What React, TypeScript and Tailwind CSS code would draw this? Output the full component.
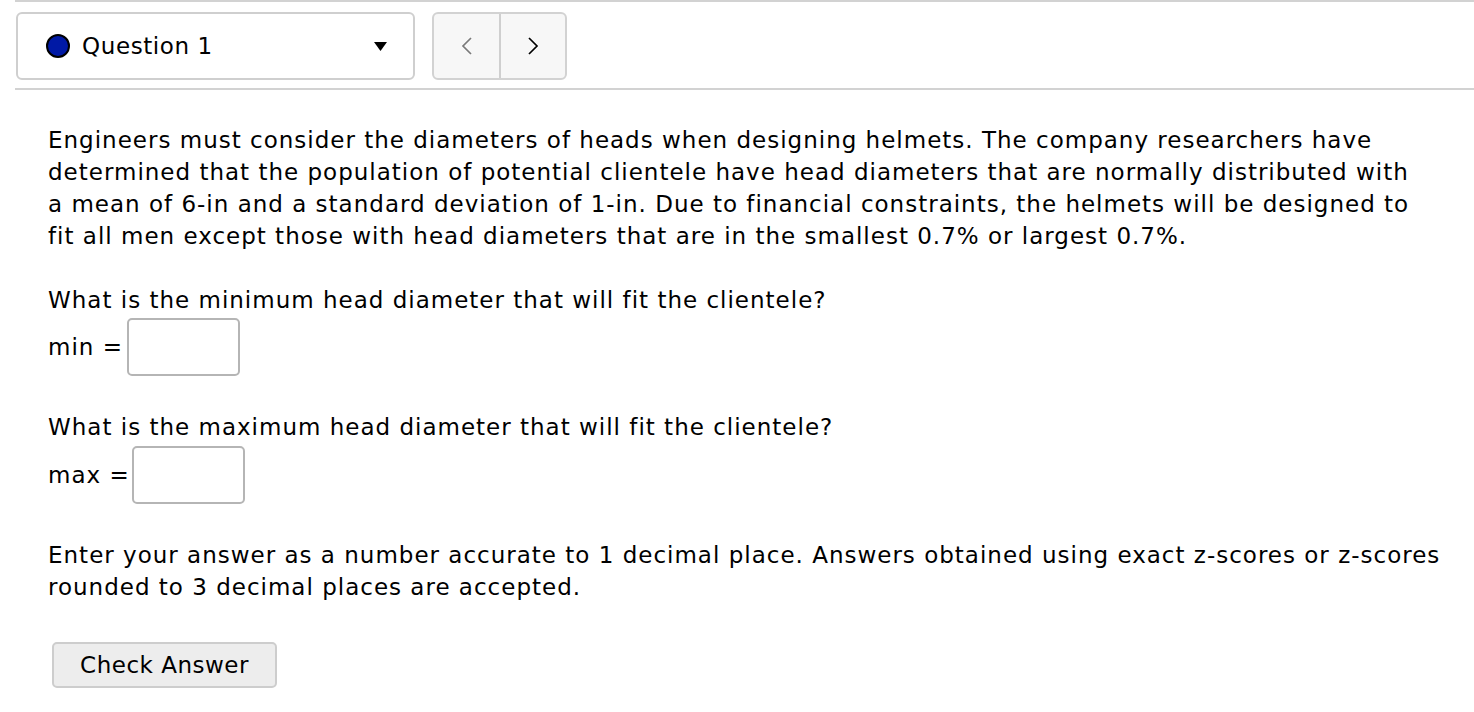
const font = { fontFamily: "'DejaVu Sans', Verdana, sans-serif" };

const Chevron = ({ dir, color }: { dir: "left" | "right"; color: string }) => (
  <svg width="12" height="18" viewBox="0 0 12 18" fill="none">
    <polyline
      points={dir === "left" ? "10,1 2,9 10,17" : "2,1 10,9 2,17"}
      stroke={color}
      strokeWidth="1.7"
      strokeLinejoin="miter"
    />
  </svg>
);

const AnswerBox = ({ className = "" }: { className?: string }) => (
  <input
    type="text"
    className={`h-[58px] w-[113px] rounded-[5px] border-2 border-[#b5b5b5] bg-white outline-none ${className}`}
  />
);

export default function App() {
  return (
    <div className="min-h-screen bg-white text-black" style={font}>
      {/* question picker bar */}
      <div className="ml-[15px] flex items-center gap-[17px] border-t-2 border-b-2 border-[#d2d2d2] pb-[8px] pl-px pt-[10px]">
        <div className="flex h-[68px] w-[399px] items-center rounded-[6px] border-2 border-[#cfcfcf] bg-white pl-[28px] pr-[26px]">
          <span className="h-[24px] w-[24px] rounded-full border-2 border-black bg-[#0019a5]" />
          <span className="ml-[12px] text-[23px] tracking-[0.6px]">Question 1</span>
          <svg className="ml-auto" width="13" height="9" viewBox="0 0 13 9">
            <polygon points="0,0 13,0 6.5,9" fill="#000" />
          </svg>
        </div>
        <div className="flex h-[68px] w-[135px] overflow-hidden rounded-[6px] border-2 border-[#d2d2d2] bg-[#f7f7f7]">
          <button className="flex w-[67px] items-center justify-center border-r-2 border-[#cfcfcf]">
            <Chevron dir="left" color="#7a7a7a" />
          </button>
          <button className="flex flex-1 items-center justify-center">
            <Chevron dir="right" color="#000" />
          </button>
        </div>
      </div>

      {/* question body */}
      <div className="pl-[48px] pr-[26px] pt-[34px] text-[23px] leading-[32px] tracking-[1px]">
        <p className="max-w-[1374px]">
          Engineers must consider the diameters of heads when designing helmets. The company researchers have
          determined that the population of potential clientele have head diameters that are normally distributed
          with a mean of 6-in and a standard deviation of 1-in. Due to financial constraints, the helmets will be
          designed to fit all men except those with head diameters that are in the smallest 0.7% or largest 0.7%.
        </p>

        <p className="mt-[32px]">What is the minimum head diameter that will fit the clientele?</p>
        <div className="mt-[2px] flex items-center">
          <span>min =</span>
          <AnswerBox className="ml-1" />
        </div>

        <p className="mt-[35px]">What is the maximum head diameter that will fit the clientele?</p>
        <div className="mt-[3px] flex items-center">
          <span>max =</span>
          <AnswerBox className="ml-[2px]" />
        </div>

        <p className="mt-[35px]">
          Enter your answer as a number accurate to 1 decimal place. Answers obtained using exact z-scores or z-scores
          rounded to 3 decimal places are accepted.
        </p>

        <button className="ml-[4px] mt-[39px] h-[46px] w-[225px] rounded-[5px] border-2 border-[#cdcdcd] bg-[#ededed] text-[23px] tracking-[0.5px] text-black">
          Check Answer
        </button>
      </div>
    </div>
  );
}
